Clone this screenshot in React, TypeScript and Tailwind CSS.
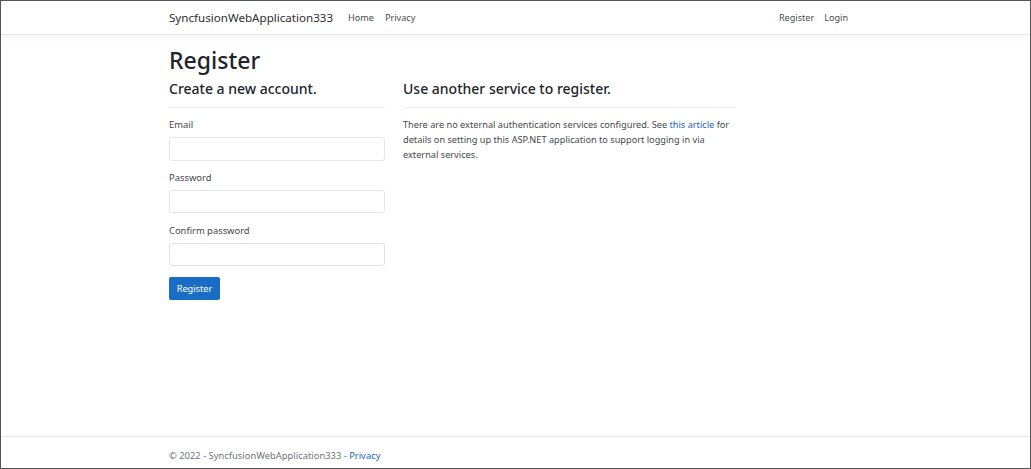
export default function App() {
  return (
    <div className="w-[1031px] h-[469px] overflow-hidden border border-[#555555] bg-white flex flex-col font-['Noto_Sans','Open_Sans',sans-serif] text-[#212529] text-[9.4px] leading-[15px]">
      <nav className="h-[34px] shrink-0 border-b border-[#e4e8e8] shadow-[0_2px_7px_rgba(0,0,0,0.05)] pl-[168px] pr-[182px] flex items-center text-[9.1px]">
        <span className="text-[11.6px] text-[#2b2f33]">SyncfusionWebApplication333</span>
        <a className="ml-[15px] text-[#4a4d50]">Home</a>
        <a className="ml-[11px] text-[#4a4d50]">Privacy</a>
        <a className="ml-auto text-[#4a4d50]">Register</a>
        <a className="ml-[10px] text-[#4a4d50]">Login</a>
      </nav>
      <main className="flex-1 pl-[168px] flex flex-col">
        <h1 className="mt-[9px] text-[23px] leading-[32px] font-medium text-[#212529]">Register</h1>
        <div className="flex gap-[18px] mt-[3px]">
          <section className="w-[216px]">
            <h2 className="text-[14px] leading-[20px] font-medium">Create a new account.</h2>
            <hr className="mt-[8px] border-t border-[#eeeeee]" />
            <form className="flex flex-col">
              <label className="mt-[9px] text-[#44484c]">Email</label>
              <input className="mt-[5px] h-[23.5px] w-full rounded-[3px] border border-[#e4e7ea] bg-white" />
              <label className="mt-[9.25px] text-[#44484c]">Password</label>
              <input className="mt-[5px] h-[23.5px] w-full rounded-[3px] border border-[#e4e7ea] bg-white" />
              <label className="mt-[9.25px] text-[#44484c]">Confirm password</label>
              <input className="mt-[5px] h-[23.5px] w-full rounded-[3px] border border-[#dfe2e6] bg-white" />
              <button type="button" className="mt-[10.5px] h-[23.5px] w-[51px] rounded-[2px] bg-[#1a6dc4] text-white text-[9.2px]">Register</button>
            </form>
          </section>
          <section className="w-[333px]">
            <h2 className="text-[14px] leading-[20px] font-medium">Use another service to register.</h2>
            <hr className="mt-[8px] border-t border-[#eeeeee]" />
            <p className="mt-[9px] text-[9.2px] text-[#44484c]">
              There are no external authentication services configured. See <a className="text-[#1a66c9]">this article</a> for details on setting up this ASP.NET application to support logging in via external services.
            </p>
          </section>
        </div>
      </main>
      <footer className="h-[32px] shrink-0 border-t border-[#e2e4e6] pl-[168px] pt-[11px] text-[#6c757d]">
        <span>© 2022 - SyncfusionWebApplication333 - <a className="text-[#1a66c9]">Privacy</a></span>
      </footer>
    </div>
  );
}
